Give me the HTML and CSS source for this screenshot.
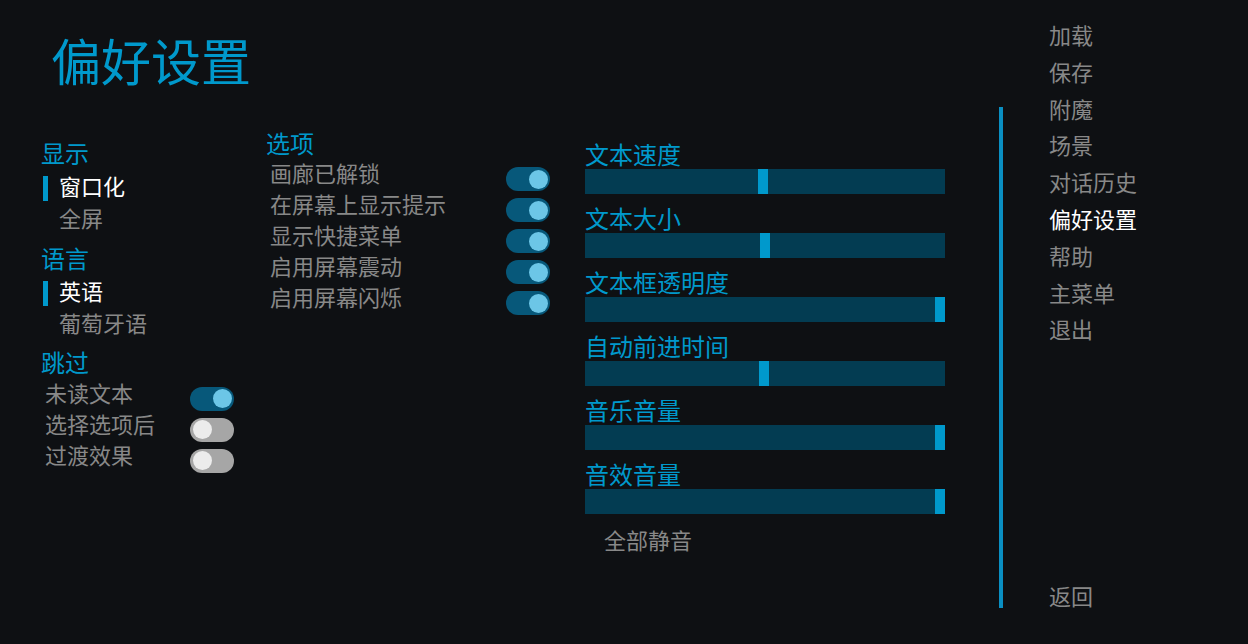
FILE: index.html
```html
<!DOCTYPE html>
<html lang="zh-CN">
<head>
<meta charset="utf-8">
<title>偏好设置</title>
<link rel="stylesheet" href="styles.css">
</head>
<body>
<div class="screen">
  <div class="main">
    <h1 class="title">偏好设置</h1>
    <div class="panes">
      <div class="col col-left">
        <div class="group">
          <div class="h">显示</div>
          <div class="radios">
            <div class="radio selected">窗口化</div>
            <div class="radio">全屏</div>
          </div>
        </div>
        <div class="group">
          <div class="h">语言</div>
          <div class="radios">
            <div class="radio selected">英语</div>
            <div class="radio">葡萄牙语</div>
          </div>
        </div>
        <div class="group">
          <div class="h">跳过</div>
          <div class="trows skip">
            <div class="trow"><span>未读文本</span><span class="toggle on"><span class="knob"></span></span></div>
            <div class="trow"><span>选择选项后</span><span class="toggle"><span class="knob"></span></span></div>
            <div class="trow"><span>过渡效果</span><span class="toggle"><span class="knob"></span></span></div>
          </div>
        </div>
      </div>
      <div class="col col-mid">
        <div class="h">选项</div>
        <div class="trows opts">
          <div class="trow"><span>画廊已解锁</span><span class="toggle on"><span class="knob"></span></span></div>
          <div class="trow"><span>在屏幕上显示提示</span><span class="toggle on"><span class="knob"></span></span></div>
          <div class="trow"><span>显示快捷菜单</span><span class="toggle on"><span class="knob"></span></span></div>
          <div class="trow"><span>启用屏幕震动</span><span class="toggle on"><span class="knob"></span></span></div>
          <div class="trow"><span>启用屏幕闪烁</span><span class="toggle on"><span class="knob"></span></span></div>
        </div>
      </div>
      <div class="col col-sliders">
        <div class="slider"><div class="h slabel">文本速度</div><div class="bar"><span class="fill" style="width:173px"></span><span class="thumb"></span></div></div>
        <div class="slider"><div class="h slabel">文本大小</div><div class="bar"><span class="fill" style="width:175px"></span><span class="thumb"></span></div></div>
        <div class="slider"><div class="h slabel">文本框透明度</div><div class="bar"><span class="fill" style="width:350px"></span><span class="thumb"></span></div></div>
        <div class="slider"><div class="h slabel">自动前进时间</div><div class="bar"><span class="fill" style="width:174px"></span><span class="thumb"></span></div></div>
        <div class="slider"><div class="h slabel">音乐音量</div><div class="bar"><span class="fill" style="width:350px"></span><span class="thumb"></span></div></div>
        <div class="slider"><div class="h slabel">音效音量</div><div class="bar"><span class="fill" style="width:350px"></span><span class="thumb"></span></div></div>
        <div class="mute">全部静音</div>
      </div>
    </div>
  </div>
  <div class="divider"></div>
  <nav class="nav">
    <div class="nav-item">加载</div>
    <div class="nav-item">保存</div>
    <div class="nav-item">附魔</div>
    <div class="nav-item">场景</div>
    <div class="nav-item">对话历史</div>
    <div class="nav-item current">偏好设置</div>
    <div class="nav-item">帮助</div>
    <div class="nav-item">主菜单</div>
    <div class="nav-item">退出</div>
    <div class="nav-item back">返回</div>
  </nav>
</div>
</body>
</html>
```

FILE: styles.css
```css
html, body {
  margin: 0;
  padding: 0;
  background: #0e1013;
}
body {
  font-family: "Noto Sans CJK SC", "Noto Sans", sans-serif;
  color: #888888;
}
.screen {
  width: 1248px;
  height: 644px;
  display: flex;
  overflow: hidden;
  background: #0e1013;
}
.main {
  width: 999px;
  flex: none;
}
.title {
  margin: 34px 0 0 51px;
  font-size: 50px;
  line-height: 50px;
  font-weight: 400;
  color: #0099cc;
}
.panes {
  display: flex;
  margin-top: 44px;
}
.col {
  flex: none;
}
.col-left {
  margin-left: 41px;
  width: 225px;
  padding-top: 13px;
}
.col-mid {
  width: 319px;
  padding-top: 3px;
}
.col-sliders {
  width: 360px;
  padding-top: 13.5px;
}
.h {
  font-size: 24px;
  line-height: 24px;
  color: #0099cc;
}
.group + .group {
  margin-top: 12.5px;
}
.radios {
  display: flex;
  flex-direction: column;
  gap: 7px;
  margin-top: 11px;
}
.radio {
  font-size: 22px;
  line-height: 18px;
  padding: 0 0 7px 11px;
  margin-left: 2px;
  border-left: 5px solid transparent;
  color: #888888;
}
.radio.selected {
  border-left-color: #0099cc;
  color: #ffffff;
}
.trows {
  display: flex;
  flex-direction: column;
}
.trows.skip {
  margin-top: 8.5px;
  margin-left: 4px;
  width: 189px;
}
.trows.opts {
  margin-top: 8px;
  margin-left: 4px;
  width: 280px;
}
.trow {
  height: 31px;
  display: flex;
  justify-content: space-between;
  align-items: flex-start;
  font-size: 22px;
  line-height: 18px;
  color: #888888;
}
.toggle {
  margin-top: 4px;
  width: 44px;
  height: 24px;
  box-sizing: border-box;
  border-radius: 12px;
  padding: 2.5px;
  display: flex;
  justify-content: flex-start;
  background: #a6a6a6;
}
.toggle .knob {
  width: 19px;
  height: 19px;
  border-radius: 50%;
  background: #ececec;
}
.toggle.on {
  justify-content: flex-end;
  background: #07587a;
}
.toggle.on .knob {
  background: #6cc6e7;
}
.slider + .slider {
  margin-top: 12px;
}
.slabel {
  margin-bottom: 3px;
}
.bar {
  width: 360px;
  height: 25px;
  display: flex;
  background: #033c52;
}
.fill {
  flex: none;
  height: 25px;
}
.thumb {
  flex: none;
  width: 10px;
  height: 25px;
  background: #0099cc;
}
.mute {
  margin-top: 13px;
  padding-left: 19px;
  font-size: 22px;
  line-height: 24px;
  color: #888888;
}
.divider {
  flex: none;
  width: 4px;
  height: 501px;
  margin-top: 107px;
  background: #0a8fc2;
}
.nav {
  flex: none;
  display: flex;
  flex-direction: column;
  padding: 16px 0 30px 46px;
  box-sizing: border-box;
  height: 644px;
}
.nav-item {
  font-size: 22px;
  line-height: 36.8px;
  color: #888888;
}
.nav-item.current {
  color: #ffffff;
}
.nav-item.back {
  margin-top: auto;
}
```
